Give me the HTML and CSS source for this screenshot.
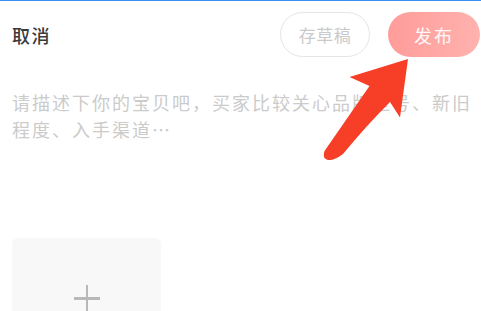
FILE: index.html
```html
<!DOCTYPE html>
<html lang="zh">
<head>
<meta charset="utf-8">
<title>发布宝贝</title>
<link rel="stylesheet" href="styles.css">
</head>
<body>
<div class="page">
  <div class="topline"></div>
  <header class="header">
    <span class="cancel">取消</span>
    <div class="actions">
      <button class="btn draft">存草稿</button>
      <button class="btn publish">发布</button>
    </div>
  </header>
  <p class="placeholder">请描述下你的宝贝吧，买家比较关心品牌型号、新旧程度、入手渠道…</p>
  <div class="upload">
    <span class="plus"></span>
  </div>
  <svg class="arrow" width="481" height="311" viewBox="0 0 481 311">
    <path d="M408 59 L349.5 77 L369.5 86 L324.5 151 Q321.5 160.5 331 160 Q336.5 159 343 154 Q366 126 390 102 L400 117.5 Z" fill="#f73e27"/>
  </svg>
</div>
</body>
</html>
```
FILE: styles.css
```css
html, body {
  margin: 0;
  padding: 0;
  background: #ffffff;
}
body {
  font-family: "Noto Sans CJK SC", "Noto Sans", sans-serif;
  overflow: hidden;
}
.page {
  position: relative;
  width: 481px;
  height: 311px;
  overflow: hidden;
}
.topline {
  height: 1px;
  background: #3b8ff5;
}
.header {
  display: flex;
  align-items: center;
  justify-content: space-between;
  margin-top: 11px;
  padding: 0 1px 0 12px;
  height: 45px;
}
.cancel {
  font-size: 18px;
  letter-spacing: 1.5px;
  color: #3a3a3a;
  font-weight: 500;
  line-height: 1;
}
.actions {
  display: flex;
  gap: 18px;
  align-items: center;
}
.btn {
  height: 45px;
  border-radius: 23px;
  font-family: inherit;
  font-size: 17px;
  line-height: 1;
  padding: 0;
  cursor: pointer;
}
.draft {
  width: 90px;
  background: #fff;
  border: 1.5px solid #e5e5e5;
  color: #cacaca;
  letter-spacing: 0.5px;
}
.publish {
  width: 92px;
  border: none;
  background: linear-gradient(90deg, #ff9c9a, #ffb2ae);
  color: #fff8f8;
  font-size: 18px;
  letter-spacing: 2px;
}
.placeholder {
  margin: 32px 8px 0 12px;
  font-size: 18px;
  letter-spacing: 2px;
  line-height: 27px;
  color: #cbcbcb;
}
.upload {
  margin: 95px 0 0 12px;
  width: 149px;
  height: 149px;
  border-radius: 6px;
  background: #f8f8f8;
  display: flex;
  justify-content: center;
  padding-top: 47px;
  box-sizing: border-box;
}
.plus {
  position: relative;
  width: 26px;
  height: 26px;
}
.plus::before,
.plus::after {
  content: "";
  position: absolute;
  background: #b8b8b8;
}
.plus::before {
  left: 0;
  right: 0;
  top: 12px;
  height: 2.5px;
}
.plus::after {
  top: 0;
  bottom: 0;
  left: 12px;
  width: 2.5px;
}
.arrow {
  position: absolute;
  left: 0;
  top: 0;
  pointer-events: none;
}
```
